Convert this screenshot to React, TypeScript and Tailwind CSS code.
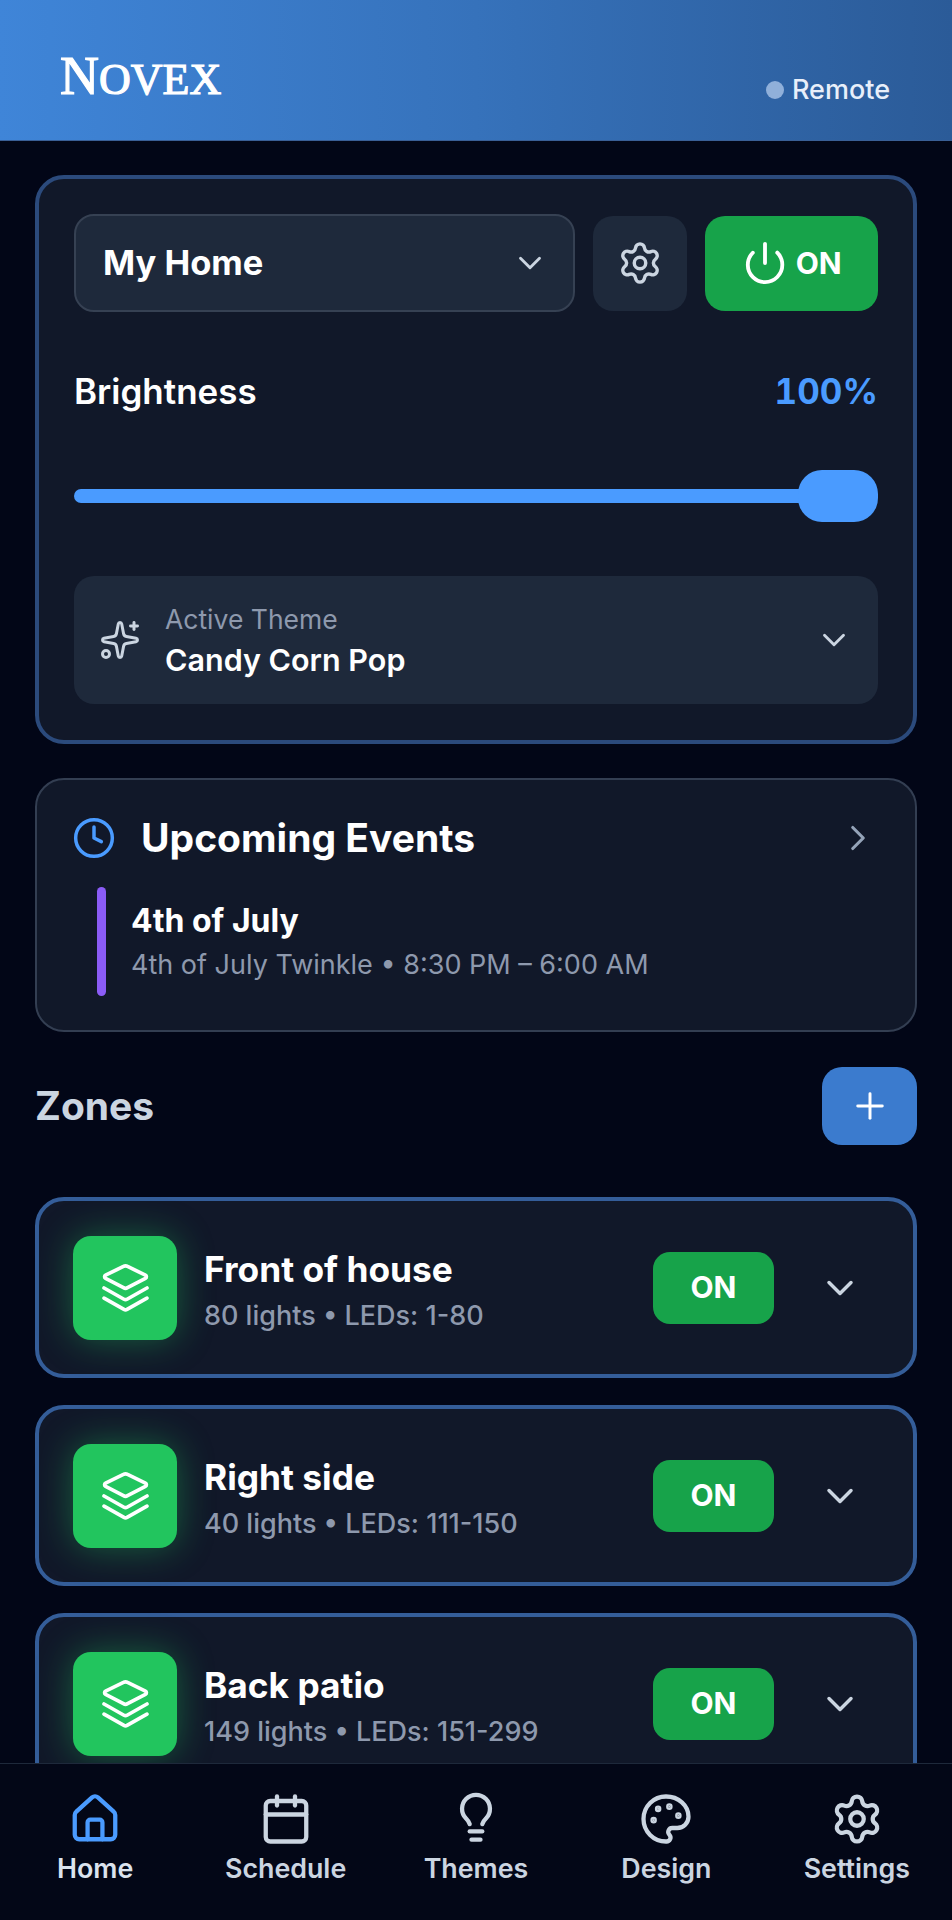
import {
  Calendar,
  ChevronDown,
  ChevronRight,
  Clock,
  Palette,
  Plus,
  Power,
  Settings,
  Sparkles,
} from "lucide-react";

type IconProps = { size?: number; strokeWidth?: number; className?: string };

const HomeIcon = ({ size = 24, strokeWidth = 2, className }: IconProps) => (
  <svg width={size} height={size} viewBox="0 0 24 24" fill="none" stroke="currentColor" strokeWidth={strokeWidth} strokeLinecap="round" strokeLinejoin="round" className={className}>
    <path d="M3 10.2a2 2 0 0 1 .7-1.5l7-6.3a2 2 0 0 1 2.6 0l7 6.3a2 2 0 0 1 .7 1.5V19a2 2 0 0 1-2 2H5a2 2 0 0 1-2-2z" />
    <path d="M8.7 21v-7.5a1.2 1.2 0 0 1 1.2-1.2h4.2a1.2 1.2 0 0 1 1.2 1.2V21" />
  </svg>
);

const BulbIcon = ({ size = 24, strokeWidth = 2, className }: IconProps) => (
  <svg width={size} height={size} viewBox="0 0 24 24" fill="none" stroke="currentColor" strokeWidth={strokeWidth} strokeLinecap="round" strokeLinejoin="round" className={className}>
    <path d="M9.2 14.3c-.3-1.1-1-1.9-1.7-2.6a6.2 6.2 0 1 1 9 0c-.7.7-1.4 1.5-1.7 2.6" />
    <path d="M9.2 17.5h5.6" />
    <path d="M10 21.2h4" />
  </svg>
);

// Stacked layers: one flat diamond over two chevrons
const LayersIcon = () => (
  <svg width={47} height={48} viewBox="0 0 46 47" fill="none" stroke="white" strokeWidth={3.6} strokeLinecap="round" strokeLinejoin="round">
    <path d="M21 2.4a4 4 0 0 1 4 0l17.5 8.5a1.8 1.8 0 0 1 0 3.2L25 23.2a4 4 0 0 1-4 0L3.5 14.1a1.8 1.8 0 0 1 0-3.2z" />
    <path d="M2 23.5 21.5 34.5a3 3 0 0 0 3 0L44 23.5" />
    <path d="M2 33.5 21.5 44.5a3 3 0 0 0 3 0L44 33.5" />
  </svg>
);

const zones = [
  { name: "Front of house", detail: "80 lights • LEDs: 1-80" },
  { name: "Right side", detail: "40 lights • LEDs: 111-150" },
  { name: "Back patio", detail: "149 lights • LEDs: 151-299" },
];

const navItems = [
  { label: "Home", icon: HomeIcon, active: true },
  { label: "Schedule", icon: Calendar, active: false },
  { label: "Themes", icon: BulbIcon, active: false },
  { label: "Design", icon: Palette, active: false },
  { label: "Settings", icon: Settings, active: false },
];

const ZoneCard = ({ name, detail }: { name: string; detail: string }) => (
  <div className="flex h-[181px] shrink-0 items-center rounded-[29px] border-[4px] border-[#345d99] bg-[#111829] pl-[34px] pr-[51px]">
    <div className="flex h-[104px] w-[104px] shrink-0 items-center justify-center rounded-[18px] bg-[#22c55e] shadow-[0_0_36px_rgba(34,197,94,0.42)]">
      <LayersIcon />
    </div>
    <div className="ml-[27px] flex-1 pt-[6px]">
      <div className="text-[35.3px] leading-[44px] font-bold text-white">{name}</div>
      <div className="mt-[6px] text-[27px] leading-[36px] font-medium text-[#8e99ad]">{detail}</div>
    </div>
    <button className="flex h-[72px] w-[121px] items-center justify-center rounded-[17px] bg-[#17a34a] text-[30px] font-bold text-white">
      ON
    </button>
    <ChevronDown size={44} strokeWidth={1.9} className="ml-[44px] text-[#cbd5e1]" />
  </div>
);

export default function App() {
  return (
    <div className="flex h-[1920px] w-[952px] flex-col overflow-hidden bg-[#020617] font-['Inter',sans-serif]">
      {/* Top bar */}
      <header className="flex h-[141px] shrink-0 items-start justify-between border-b border-[#3a5f96] bg-gradient-to-r from-[#3f85d8] via-[#3672bb] to-[#2b5b98] pl-[60px] pr-[62px]">
        <div className="mt-[46px] font-['Liberation_Serif',serif] text-[54px] leading-[60px] font-normal text-white [-webkit-text-stroke:1.2px_white]">
          N<span className="text-[44px]">OVEX</span>
        </div>
        <div className="mt-[72px] flex items-center gap-[8px]">
          <span className="h-[18px] w-[18px] rounded-full bg-[#90b0da]" />
          <span className="text-[27px] leading-[36px] font-medium text-[#e8effa]">Remote</span>
        </div>
      </header>

      <main className="flex min-h-0 flex-1 flex-col overflow-hidden px-[35px] pt-[34px]">
        {/* Controller card */}
        <section className="h-[569px] shrink-0 rounded-[29px] border-[4px] border-[#2b4a7c] bg-[#111829] px-[35px] pt-[35px]">
          <div className="flex items-center">
            <div className="flex h-[98px] w-[502px] items-center justify-between rounded-[20px] border-2 border-[#364153] bg-[#1e293b] pl-[27px] pr-[24px]">
              <span className="text-[34.5px] font-bold text-white">My Home</span>
              <ChevronDown size={38} strokeWidth={1.8} className="text-[#cbd5e1]" />
            </div>
            <button className="ml-[18px] flex h-[95px] w-[95px] items-center justify-center rounded-[20px] bg-[#1e293b]">
              <Settings size={46} strokeWidth={1.8} className="text-[#cbd5e1]" />
            </button>
            <button className="ml-[18px] flex h-[95px] w-[173px] items-center justify-center gap-[8px] rounded-[20px] bg-[#17a34a] text-white">
              <Power size={46} strokeWidth={2} />
              <span className="text-[30px] font-bold">ON</span>
            </button>
          </div>

          <div className="mt-[57px] flex items-center justify-between">
            <span className="text-[35px] leading-[44px] font-semibold text-white">Brightness</span>
            <span className="text-[35px] leading-[44px] font-bold text-[#4a9bff] tabular-nums">100%</span>
          </div>

          {/* Brightness slider */}
          <div className="relative mt-[57px] h-[52px]">
            <div className="absolute top-[19px] right-[40px] left-0 h-[14px] rounded-l-full bg-[#4a9bff]" />
            <div className="absolute top-0 right-0 h-[52px] w-[80px] rounded-[24px] bg-[#4a9bff]" />
          </div>

          <div className="mt-[54px] flex h-[128px] items-center rounded-[20px] bg-[#1e293b] pl-[25px] pr-[25px]">
            <Sparkles size={42} strokeWidth={1.7} className="text-[#cbd5e1]" />
            <div className="ml-[24px] flex-1">
              <div className="text-[26.5px] leading-[34px] text-[#8e99ad]">Active Theme</div>
              <div className="mt-[5px] text-[30.5px] leading-[38px] font-semibold text-white">Candy Corn Pop</div>
            </div>
            <ChevronDown size={38} strokeWidth={1.8} className="text-[#cbd5e1]" />
          </div>
        </section>

        {/* Upcoming events */}
        <section className="mt-[34px] h-[254px] shrink-0 rounded-[29px] border-2 border-[#333e52] bg-[#111829] pl-[36px] pr-[36px] pt-[35px]">
          <div className="flex items-center">
            <Clock size={44} strokeWidth={1.9} className="-ml-[1px] text-[#4a9bff]" />
            <span className="ml-[25px] flex-1 text-[39px] leading-[46px] font-bold text-white">Upcoming Events</span>
            <ChevronRight size={42} strokeWidth={1.8} className="text-[#94a3b8]" />
          </div>
          <div className="mt-[26px] ml-[24px] flex">
            <div className="h-[109px] w-[9px] rounded-full bg-[#8b5cf6]" />
            <div className="ml-[25px] pt-[14px]">
              <div className="text-[32px] leading-[40px] font-bold text-white">4th of July</div>
              <div className="mt-[6px] text-[27px] leading-[36px] text-[#8e99ad]">
                4th of July Twinkle • 8:30 PM – 6:00 AM
              </div>
            </div>
          </div>
        </section>

        {/* Zones */}
        <div className="mt-[35px] flex items-center justify-between">
          <h2 className="text-[39px] font-bold text-[#cbd5e1]">Zones</h2>
          <button className="flex h-[78px] w-[95px] items-center justify-center rounded-[20px] bg-[#3b7bce]">
            <Plus size={42} strokeWidth={1.7} className="text-white" />
          </button>
        </div>

        <div className="mt-[52px] flex flex-col gap-[27px]">
          {zones.map((zone) => (
            <ZoneCard key={zone.name} name={zone.name} detail={zone.detail} />
          ))}
        </div>
      </main>

      {/* Bottom navigation */}
      <nav className="grid h-[157px] shrink-0 grid-cols-5 border-t border-[#1e293b] bg-[#030717] pt-[28px]">
        {navItems.map((item) => {
          const Icon = item.icon;
          return (
            <div key={item.label} className="flex flex-col items-center">
              <Icon
                size={54}
                strokeWidth={1.9}
                className={item.active ? "text-[#4a9bff]" : "text-[#cbd5e1]"}
              />
              <span className={`mt-[5px] text-[26.8px] leading-[34px] font-semibold ${item.active ? "text-[#dbe3ee]" : "text-[#cbd5e1]"}`}>
                {item.label}
              </span>
            </div>
          );
        })}
      </nav>
    </div>
  );
}
